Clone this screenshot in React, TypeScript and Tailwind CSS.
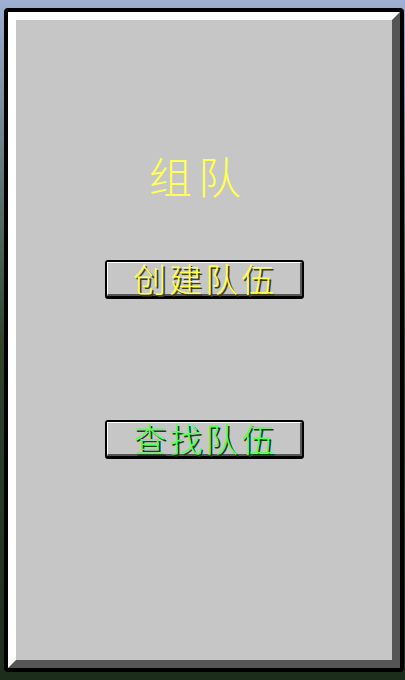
import React from "react";

const cjk = "font-['Noto_Sans_CJK_SC','Noto_Sans_CJK_JP',sans-serif]";

function McButton({ label, color }: { label: string; color: "yellow" | "green" }) {
  const textCls =
    color === "yellow"
      ? "text-[#ffff55] [text-shadow:2px_2px_0_#3f3f15]"
      : "text-[#55ff55] [text-shadow:2px_2px_0_#153f15]";
  return (
    <button className="mx-auto block w-[199px] h-[39px] border-2 border-b-[3px] border-black rounded-[3px] bg-[#555555] p-0">
      <div className="h-full w-full border-t border-l border-white border-b-2 border-r-2 border-b-[#555555] border-r-[#555555] bg-[#c6c6c6] flex items-center justify-center">
        <span className={`${cjk} ${textCls} text-[33px] font-light leading-none tracking-[3px] pl-[3px]`}>{label}</span>
      </div>
    </button>
  );
}

export default function App() {
  return (
    <div className="w-[405px] h-[680px] overflow-hidden bg-gradient-to-b from-[#9fb0d4] via-[#2e4529] to-[#1d2d1c] pt-2 pl-1 pr-px">
      {/* Team panel */}
      <div className="h-[664px] border-4 border-black rounded-[4px]">
        <div className="h-full border-t-8 border-l-8 border-t-white border-l-white border-b-8 border-r-8 border-b-[#555555] border-r-[#555555] bg-[#c6c6c6] flex flex-col">
          <div className="pt-[134px] flex justify-center pr-[12px]">
            <h1 className={`${cjk} text-[#ffff55] text-[43px] leading-none tracking-[6px] font-light`}>组队</h1>
          </div>
          <div className="mt-[63px]">
            <McButton label="创建队伍" color="yellow" />
          </div>
          <div className="mt-[121px]">
            <McButton label="查找队伍" color="green" />
          </div>
        </div>
      </div>
    </div>
  );
}
